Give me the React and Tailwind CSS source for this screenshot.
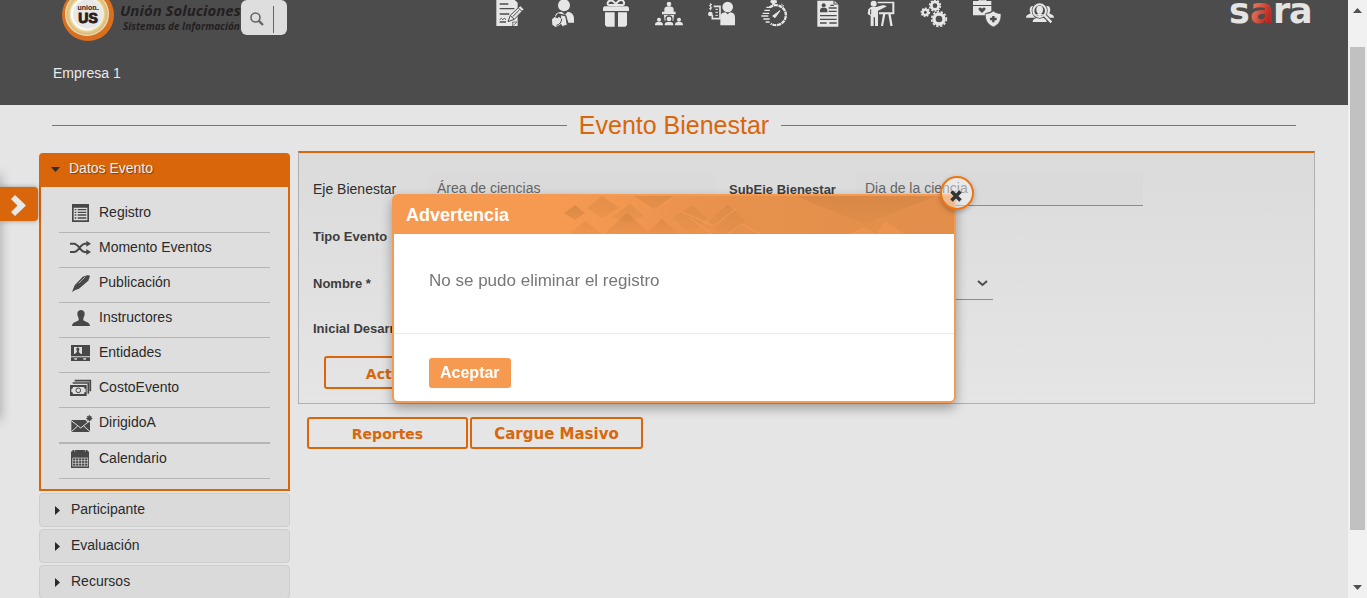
import React from "react";

const INK = "#e6e6e6";
const DARK = "#4c4c4c";

function Tool({ label, children }) {
  return (
    <a href="#" aria-label={label} className="block shrink-0">
      <svg viewBox="0 0 84 84" className="block h-7 w-7" fill={INK} stroke="none">
        {children}
      </svg>
    </a>
  );
}

function Toolbar() {
  return (
    <nav className="flex flex-1 justify-center gap-[25px] pl-8">
      <Tool label="Solicitudes">
        <path d="M1 0H56L65 8V78H1Z" />
        <g stroke={DARK} strokeWidth="4" fill="none">
          <path d="M11 12H37M11 26H55M11 42H40M11 66H30" />
          <path d="M11 59l5-4 4 4 5-4 5 4" strokeWidth="3" />
        </g>
        <path d="M36 65L43 46L73 17L84 28L55 58Z" stroke={DARK} strokeWidth="3" />
        <path d="M43 47L54 57M67 24L78 34M50 50L70 30" stroke={DARK} strokeWidth="3" />
        <path d="M50 78V66H63Z" stroke={DARK} strokeWidth="2" />
      </Tool>
      <Tool label="Personas">
        <circle cx="45" cy="16" r="18" />
        <path d="M18 52C18 40 26 36 38 35L48 44L56 35C68 36 75 44 75 56V68H58L51 45L27 40Z" />
        <path d="M35 44L50 48L55 75L40 80L34 71Z" stroke={DARK} strokeWidth="3" />
        <path d="M9 58L17 51L25 55L30 50L40 60L33 74L20 81L10 74Z" />
        <path d="M22 76C32 74 38 66 38 56" fill="none" stroke={DARK} strokeWidth="3" />
      </Tool>
      <Tool label="Beneficios">
        <path d="M7 19H77L81 23V33H3V23ZM9 37H38V80H14L9 75ZM48 37H75V75L70 80H48Z" />
        <path d="M42 14C34 -2 20 -1 17 9C16 13 18 15 21 15H62C67 14 67 9 65 5C60 -4 47 0 42 14Z" fill="none" stroke={INK} strokeWidth="6" />
      </Tool>
      <Tool label="Capacitaciones">
        <circle cx="42" cy="12" r="7" />
        <path d="M28 35V28C28 21 34 19 42 19S56 21 56 28V35H62V43H21V35ZM27 45H57L55 62H29Z" />
        <circle cx="42" cy="57" r="9" stroke={DARK} strokeWidth="4" />
        <circle cx="12" cy="59" r="6" /><circle cx="72" cy="59" r="6" />
        <path d="M0 76C0 66 5 66 12 66S24 66 24 76ZM29 76C29 66 34 66 42 66S55 66 55 76ZM60 76C60 66 65 66 72 66S84 66 84 76Z" />
      </Tool>
      <Tool label="Nómina">
        <circle cx="59" cy="21" r="16" />
        <path d="M37 76V53C37 42 42 38 52 37L59 43L66 37C76 38 81 42 81 53V76Z" />
        <path d="M17 19H36V56H13V45" fill="none" stroke={INK} strokeWidth="5" />
        <path d="M22 28H30M22 37H30M22 46H30" stroke={INK} strokeWidth="3" />
        <circle cx="7" cy="42" r="7" />
        <path d="M12 14C4 10 3 20 8 20S12 29 3 26M8 10V31" fill="none" stroke={INK} strokeWidth="3" />
      </Tool>
      <Tool label="Tiempos">
        <path d="M26 22A30 30 0 1 1 29 71" fill="none" stroke={INK} strokeWidth="7" strokeDasharray="12 2" />
        <path d="M30 2H46V8H41V14H35V8H30ZM61 12L69 19" stroke={INK} strokeWidth="3" />
        <path d="M16 22H27M10 31H27M5 40H25M1 48H22M7 57H26M14 66H26" stroke={INK} strokeWidth="4" />
        <path d="M35 48L57 32L42 53Z" stroke={INK} strokeWidth="3" />
      </Tool>
      <Tool label="Hojas de vida">
        <path d="M10 2H60L73 12V80H10Z" />
        <g fill={DARK}><circle cx="29" cy="16" r="6" /><path d="M18 37V31C18 24 23 23 29 23S40 24 40 31V37Z" /></g>
        <path d="M44 24H68M44 34H68M18 47H68M18 58H68M18 69H38M46 69H68M49 16H60" stroke={DARK} strokeWidth="4" />
        <path d="M60 0V12H75" fill="none" stroke={DARK} strokeWidth="3" />
      </Tool>
      <Tool label="Formación">
        <circle cx="20" cy="11" r="9" />
        <path d="M4 28L12 21H28L49 15L60 19L33 32V78H24V52H20V78H11V47L2 42Z" />
        <path d="M32 5H82V43H36V37H76V10H32ZM48 43H55L48 78H42ZM64 43H71L77 78H70Z" />
        <path d="M11 28V43" stroke={DARK} strokeWidth="3" />
      </Tool>
      <Tool label="Parámetros">
        <g fill="none" stroke={INK}>
          <circle cx="45" cy="17" r="11" strokeWidth="8" /><circle cx="45" cy="17" r="16" strokeWidth="5" strokeDasharray="6 4" />
          <circle cx="16" cy="37" r="8" strokeWidth="7" /><circle cx="16" cy="37" r="12" strokeWidth="5" strokeDasharray="5 4" />
          <circle cx="57" cy="57" r="15" strokeWidth="10" /><circle cx="57" cy="57" r="22" strokeWidth="5" strokeDasharray="7 5" />
        </g>
      </Tool>
      <Tool label="Salud">
        <path d="M0 3H55V15H0ZM0 18H55V34L37 40V46H0Z" />
        <path d="M19 6V0H38V6" fill="none" stroke={INK} strokeWidth="4" />
        <path d="M27 39L17 29C15 22 23 20 27 26C31 20 40 22 37 29Z" fill={DARK} />
        <path d="M61 33C68 39 76 40 84 41C85 60 79 73 61 81C43 73 36 60 37 41C46 41 54 39 61 33Z" stroke={DARK} strokeWidth="2" />
        <path d="M61 48V67M51 57H71" stroke={DARK} strokeWidth="7" />
      </Tool>
      <Tool label="Selección">
        <path d="M0 53C1 44 8 44 14 40C10 32 10 20 18 18C26 18 28 24 28 28V53ZM84 53C83 44 76 44 70 40C74 32 74 20 66 18C58 18 56 24 56 28V53ZM20 66C20 54 34 54 42 50C52 54 62 55 62 66Z" />
        <circle cx="41" cy="32" r="24" fill={DARK} />
        <circle cx="41" cy="32" r="19" fill="none" stroke={INK} strokeWidth="6" />
        <ellipse cx="41" cy="29" rx="10" ry="12" /><path d="M31 44C36 38 46 38 51 44L41 49Z" />
        <path d="M57 47L74 65" stroke={DARK} strokeWidth="13" /><path d="M56 46L76 67" stroke={INK} strokeWidth="7" />
      </Tool>
    </nav>
  );
}

function Header() {
  return (
    <header className="h-[105px] bg-[#4c4c4c] font-['Liberation_Sans',sans-serif]">
      <div className="flex h-[45px] items-start pl-[62px] pr-[34px]">
        <svg viewBox="0 0 52 42" className="block h-[42px] w-[52px] shrink-0" role="img" aria-label="Unión Soluciones">
          <defs>
            <radialGradient id="gold">
              <stop offset="0.7" stopColor="#fff" />
              <stop offset="0.8" stopColor="#e8d08c" />
              <stop offset="0.9" stopColor="#d9bc7c" />
              <stop offset="1" stopColor="#f4e3c2" />
            </radialGradient>
          </defs>
          <circle cx="26" cy="15" r="26" fill="#d9701f" />
          <circle cx="25" cy="14" r="22" fill="url(#gold)" />
          <circle cx="26" cy="14" r="15" fill="#e8e8e6" />
          <text x="25" y="10" textAnchor="middle" fontFamily="Liberation Sans" fontWeight="700" fontSize="7" fill="#2a2020">union</text>
          <text x="26" y="23" textAnchor="middle" fontFamily="Liberation Sans" fontWeight="700" fontSize="14" fill="#2a2020" stroke="#2a2020">US</text>
          <path d="M32 9.500H37" stroke="#d23c3c" />
        </svg>
        <div className="w-[127px] shrink-0 overflow-hidden whitespace-nowrap pl-[6px] font-['Open_Sans',sans-serif] font-bold italic text-[#232021]">
          <div className="text-[15px] leading-[20px]">Unión Soluciones</div>
          <div className="pl-[3px] text-[10px] leading-[12px]">Sistemas de Información</div>
        </div>
        <label className="flex h-[35px] w-[46px] shrink-0 rounded-md bg-[#dedede] pl-[9px] pt-[6px]">
          <svg viewBox="0 0 14 14" className="mt-[6px] h-[14px] w-[14px]" fill="none" stroke="#666">
            <circle cx="5.500" cy="5.500" r="4.500" strokeWidth="1.600" />
            <path d="M8.800 8.800L13 13" strokeWidth="2.400" />
          </svg>
          <input type="text" aria-label="Buscar" className="ml-[9px] h-[27px] w-[13px] border-l border-[#666] bg-transparent outline-none" />
        </label>
        <Toolbar />
        <svg viewBox="0 0 84 26" className="block h-[26px] w-[84px] shrink-0" role="img" aria-label="sara">
          <defs>
            <linearGradient id="ruby" x1="0" y1="0.300" x2="1" y2="1">
              <stop offset="0.2" stopColor="#e07055" />
              <stop offset="0.6" stopColor="#c93228" />
              <stop offset="1" stopColor="#8f1a1a" />
            </linearGradient>
          </defs>
          <g fontFamily="DejaVu Sans" fontWeight="700" fontSize="35" fill="#e4e4e4">
            <text x="-1" y="23">s</text>
            <text x="20" y="23" fill="url(#ruby)">a</text>
            <text x="43" y="23">r</text>
            <text x="59" y="23">a</text>
          </g>
        </svg>
      </div>
      <p className="pl-[53px] pt-[18px] text-[14px] leading-[20px] text-[#eaeaea]">Empresa 1</p>
    </header>
  );
}

const menu = [
  ["Registro", <>
    <path d="M6 0H57V54H6ZM11 11V49H52V11Z" fillRule="evenodd" />
    <path d="M14 17H19M14 25H19M14 33H19M14 42H19M23 17H49M23 25H49M23 33H49M23 42H49" stroke="#484848" strokeWidth="4" />
  </>],
  ["Momento Eventos", <>
    <path d="M0 14H12C26 14 31 39 45 39H52M0 39H12C26 39 31 14 45 14H52" fill="none" stroke="#484848" strokeWidth="6" />
    <path d="M49 5L63 14L49 23ZM49 30L63 39L49 48Z" />
  </>],
  ["Publicación", <>
    <path d="M6 54L14 34L38 8L54 3L60 6L55 20L27 44L16 48Z" />
    <path d="M26 28L46 8" stroke="#dedede" strokeWidth="2" />
  </>],
  ["Instructores", <path d="M22 14C22 -1 44 -1 44 14C44 22 40 25 40 29V34C45 38 60 40 60 51H6C6 40 21 38 26 34V29C26 25 22 22 22 14Z" />],
  ["Entidades", <>
    <path d="M3 3H60V37H3ZM3 40H60V51H3Z" />
    <path d="M12 9H36V30H12Z" fill="#dedede" />
    <path d="M19 15C19 9 28 9 28 15C28 21 26 22 26 24L33 30H14L21 24Z" />
    <path d="M12 43H22L20 47H14ZM39 43H49L47 47H41Z" fill="#dedede" />
  </>],
  ["CostoEvento", <>
    <path d="M14 5H61V37M8 12H55V44" fill="none" stroke="#484848" strokeWidth="5" />
    <path d="M0 18H50V51H0Z" />
    <path d="M9 24H42C42 28 44 30 47 30V39C44 39 42 41 42 45H9C9 41 7 39 4 39V30C7 30 9 28 9 24Z" fill="#dedede" />
    <circle cx="25" cy="34" r="7" fill="none" stroke="#484848" strokeWidth="3" />
  </>],
  ["DirigidoA", <>
    <path d="M4 18H60V54H4Z" />
    <path d="M4 20L32 42L60 20M4 53L23 36M60 53L41 36" fill="none" stroke="#dedede" strokeWidth="3" />
    <circle cx="58" cy="13" r="12" fill="#dedede" />
    <path d="M58 4V22M49 13H67M52 7L64 19M64 7L52 19" stroke="#484848" strokeWidth="4" />
  </>],
  ["Calendario", <>
    <path d="M3 6L9 0H51L57 6V54H3Z" />
    <path d="M14 0V5M46 0V5" stroke="#dedede" strokeWidth="2" />
    <path d="M8 24H54M8 32H54M8 40H54M8 48H54M8 24V49M17 24V49M26 24V49M35 24V49M44 24V49M53 24V49" stroke="#dedede" strokeWidth="2" />
  </>],
];

function Sidebar() {
  return (
    <aside className="mt-0.5 flex w-[251px] shrink-0 flex-col gap-0.5 text-[14px] text-[#2a2a2a]">
      <section>
        <button className="flex h-[34px] w-full items-center rounded-t bg-[#d9660a] pb-[3px] pl-3 text-left text-[#eee] [text-shadow:1px_1px_1px_#0006]">
          <svg viewBox="0 0 9 5" className="mr-[9px] mt-px h-[5px] w-[9px]" fill="#2e2e2e"><path d="M0 0H9L4.500 5Z" /></svg>
          Datos Evento
        </button>
        <ul className="border-2 border-t-0 border-[#d9660a] bg-[#dedede] pb-[10px] pl-[18px] pr-[18px] pt-[11px]">
          {menu.map(([name, icon], i) => (
            <li key={name} className={i === 6 ? "border-b-2 border-[#b5b5b5]" : "border-b border-[#b5b5b5]"}>
              <a href="#" className="flex h-[34px] items-start gap-[5px] pl-[11px]">
                <svg viewBox="0 0 72 60" className="mt-[6px] h-5 w-6" fill="#484848">{icon}</svg>
                <span className="leading-[28px]">{name}</span>
              </a>
            </li>
          ))}
        </ul>
      </section>
      {["Participante", "Evaluación", "Recursos"].map((t) => (
        <button key={t} className="flex h-[34px] w-full items-center rounded-sm border border-[#cdcdcd] bg-[#dadada] pb-0.5 pl-[15px] text-left">
          <svg viewBox="0 0 5 9" className="mr-[11px] mt-[3px] h-[9px] w-[5px]" fill="#2a2a2a"><path d="M0 0V9L5 4.500Z" /></svg>
          {t}
        </button>
      ))}
    </aside>
  );
}

const labelCls = "whitespace-nowrap text-[13px] font-bold text-[#3d3d3d]";
const inputCls = "h-[33px] w-full min-w-0 rounded-t bg-[#dadada] px-[9px] pb-[3px] text-[14px] text-[#666] outline-none";
const actionCls = "rounded-[3px] border-2 border-[#d9660a] pt-[3px] font-['DejaVu_Sans',sans-serif] font-bold text-[#d9660a]";

function EventForm() {
  return (
    <main className="min-w-0 flex-1">
      <form className="border border-t-2 border-[#b0b0b0] border-t-[#d9660a] bg-linear-to-b from-[#dbdbdb] to-[#e5e5e5] pb-[14px] pl-[14px] pt-5">
        <div className="grid grid-cols-[115fr_301fr_127fr_287fr_171fr] items-center gap-y-[14px]">
          <label htmlFor="eje" className="whitespace-nowrap text-[14px] text-[#2e2e2e]">Eje Bienestar</label>
          <div className="pr-[13px]">
            <input id="eje" readOnly defaultValue="Área de ciencias" className={inputCls} />
          </div>
          <label htmlFor="subeje" className={labelCls}>SubEje Bienestar</label>
          <input id="subeje" readOnly defaultValue="Dia de la ciencia" className={inputCls + " border-b border-[#8c8c8c]"} />
          <span />
          <label htmlFor="tipo" className={labelCls}>Tipo Evento</label>
          <div className="col-span-4 pr-[600px]">
            <input id="tipo" className="h-[33px] w-full bg-transparent" />
          </div>
          <label htmlFor="nombre" className={labelCls}>Nombre *</label>
          <div className="col-span-3 grid w-[79%] items-center">
            <select id="nombre" className="col-start-1 row-start-1 h-[33px] w-full appearance-none border-b border-[#8c8c8c] bg-transparent outline-none" />
            <svg viewBox="0 0 11 7" className="pointer-events-none col-start-1 row-start-1 mr-[5px] h-[7px] w-[11px] justify-self-end" fill="none" stroke="#4c4c4c" strokeWidth="2">
              <path d="M1 1L5.500 5L10 1" />
            </svg>
          </div>
          <span />
          <label htmlFor="inicial" className={labelCls}>Inicial Desarrollo</label>
          <div className="col-span-4 pr-[600px]">
            <input id="inicial" className="block h-[30px] w-full bg-transparent" />
          </div>
        </div>
        <button type="button" className={actionCls + " ml-[11px] mt-3 block h-[33px] w-[163px] text-[14px]"}>Actualizar</button>
      </form>
      <div className="flex gap-0.5 pl-[9px] pt-[13px]">
        <button className={actionCls + " h-8 w-[161px] text-[14px]"}>Reportes</button>
        <button className={actionCls + " h-8 w-[173px] text-[15px]"}>Cargue Masivo</button>
      </div>
    </main>
  );
}

function HeaderPattern() {
  return (
    <svg viewBox="0 0 390 38" preserveAspectRatio="none" className="h-full w-[390px]">
      <defs>
        <linearGradient id="fadeIn"><stop offset="0" stopColor="#c98040" stopOpacity="0" /><stop offset="0.45" stopColor="#c98040" stopOpacity=".35" /><stop offset="1" stopColor="#c98040" stopOpacity=".45" /></linearGradient>
        <linearGradient id="tileUp" x1="0" y1="0" x2="0" y2="1"><stop offset="0" stopColor="#c07838" stopOpacity=".5" /><stop offset="1" stopColor="#c07838" stopOpacity=".1" /></linearGradient>
        <linearGradient id="tileDown" x1="0" y1="0" x2="0" y2="1"><stop offset="0" stopColor="#c07838" stopOpacity=".3" /><stop offset="1" stopColor="#c07838" stopOpacity=".05" /></linearGradient>
      </defs>
      <rect width="390" height="38" fill="url(#fadeIn)" />
      <path d="M0 17L11 9L21 17L11 24ZM5 38L21 25L38 38ZM42 36L63 17L86 38H42ZM82 38L98 23L114 38Z" fill="url(#tileUp)" />
      <path d="M23 12L38 0L55 12L38 22ZM48 21L66 8L80 20L63 26ZM70 0H110L90 13ZM108 22L128 9L144 22L128 38ZM144 26L164 8L182 26L168 38H154ZM232 0H372L300 28Z" fill="url(#tileDown)" />
      <path d="M284 38L300 31L312 38L322 25L340 38Z" fill="#f69a52" opacity=".5" />
      <path d="M101 7L110 0M118 16L150 30L174 11M126 22L148 38M164 38L178 28L196 38" fill="none" stroke="#f7a665" opacity=".6" />
    </svg>
  );
}

function WarningDialog() {
  return (
    <div className="fixed inset-y-0 left-0 right-[19px] flex items-center justify-center pb-px">
      <div role="dialog" aria-labelledby="dlg-title" className="relative w-[564px] rounded-md border-2 border-[#f59a52] bg-white shadow-[0_5px_12px_#0005]">
        <div className="flex h-[38px] items-center justify-between bg-[#f69a52] pl-3">
          <h2 id="dlg-title" className="pt-px text-[18px] font-bold text-white">Advertencia</h2>
          <HeaderPattern />
        </div>
        <p className="border-b border-[#ebebeb] px-[35px] pb-10 pt-[35px] text-[17px] leading-6 text-[#76777a]">No se pudo eliminar el registro</p>
        <div className="px-[35px] pb-[13px] pt-6">
          <button className="block h-[30px] rounded-[3px] bg-[#f69a52] px-[11px] text-[16px] font-bold text-white">Aceptar</button>
        </div>
        <button aria-label="Cerrar" className="absolute -right-5 -top-5 flex h-[34px] w-[34px] items-center justify-center rounded-full border-2 border-[#ee7411] bg-white/40 shadow-[0_2px_5px_#0004]">
          <svg viewBox="0 0 12 12" className="mr-[3px] mt-[5px] h-3 w-3" stroke="#333" strokeWidth="3.500"><path d="M1.500 1.500L10.500 10.500M10.500 1.500L1.500 10.500" /></svg>
        </button>
      </div>
    </div>
  );
}

function ScrollTrack() {
  return (
    <div aria-hidden="true" className="flex w-[19px] shrink-0 flex-col items-center bg-[#f1f1f1]">
      <svg viewBox="0 0 9 5" className="mb-1 mt-2 h-[5px] w-[9px]" fill="#505050"><path d="M0 5H9L4.500 0Z" /></svg>
      <div className="flex-[30]" />
      <div className="w-[15px] flex-[483] bg-[#c1c1c1]" />
      <div className="flex-[51]" />
      <svg viewBox="0 0 9 5" className="mb-2 mt-1 h-[5px] w-[9px]" fill="#505050"><path d="M0 0H9L4.500 5Z" /></svg>
    </div>
  );
}

export default function App() {
  return (
    <div className="flex h-screen overflow-hidden bg-[#e5e5e5] font-['Liberation_Sans',sans-serif]">
      <div className="relative min-w-0 flex-1 overflow-hidden">
        <Header />
        <div className="flex items-center gap-3 px-[52px] pb-[12px] pt-[6px]">
          <span className="h-px flex-1 bg-[#777]" />
          <h1 className="text-[25px] leading-[28px] text-[#d9660a]">Evento Bienestar</h1>
          <span className="h-px flex-1 bg-[#777]" />
        </div>
        <div className="flex gap-2 pl-[39px] pr-[33px]">
          <Sidebar />
          <EventForm />
        </div>
        <div className="absolute -left-2 top-[175px] h-[245px] w-2 shadow-[0_0_12px_#0005]" />
        <button aria-label="Abrir panel" className="absolute left-0 top-[187px] flex h-[34px] w-[38px] items-center rounded-r bg-[#d9660a] pl-[11px] shadow-[0_0_5px_#0005]">
          <svg viewBox="0 0 15 21" className="mt-[3px] h-[21px] w-[15px]" fill="#e8e8e8"><path d="M0 4L4 0L15 10.500L4 21L0 17L6.500 10.500Z" /></svg>
        </button>
      </div>
      <ScrollTrack />
      <WarningDialog />
    </div>
  );
}
